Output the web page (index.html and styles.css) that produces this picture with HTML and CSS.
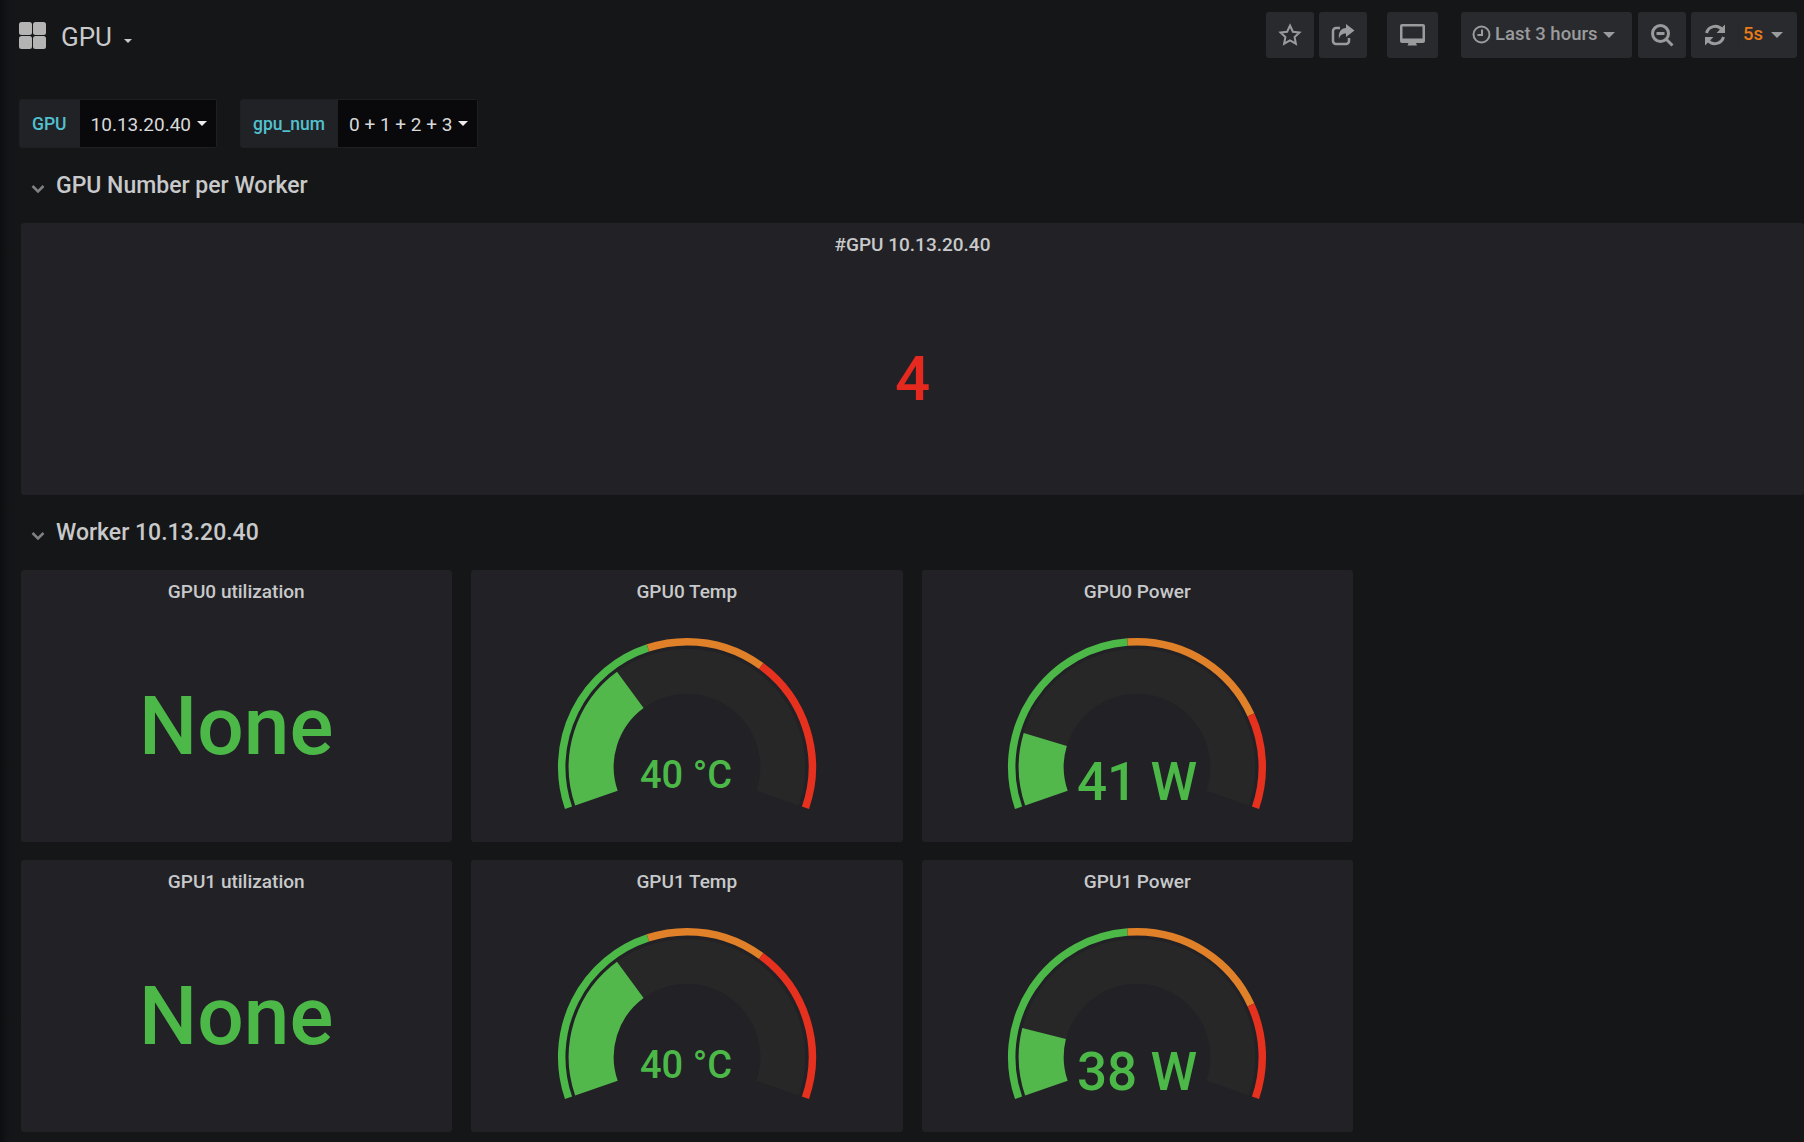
FILE: index.html
```html
<!DOCTYPE html>
<html>
<head>
	<meta charset="utf-8">
	<title>GPU</title>
	<link rel="stylesheet" href="styles.css">
</head>
<body>

	<header class="navbar">
		<div class="nav-title">
			<svg class="grid-icon" width="27" height="27" viewBox="0 0 27 27">
				<rect x="0" y="0" width="13" height="13" rx="2.5"></rect>
				<rect x="14" y="0" width="13" height="13" rx="2.5"></rect>
				<rect x="0" y="14" width="13" height="13" rx="2.5"></rect>
				<rect x="14" y="14" width="13" height="13" rx="2.5"></rect>
			</svg>
			<span class="dash-name">GPU</span>
			<span class="caret caret-small"></span>
		</div>
		<div class="nav-tools">
			<div class="btn btn-icon">
				<svg width="24" height="24" viewBox="0 0 24 24" class="icon-line"><path d="M12 2.500l2.900 6.200 6.600.8-4.900 4.600 1.300 6.600-5.900-3.300-5.900 3.300 1.300-6.600-4.900-4.600 6.600-.8z"></path></svg>
			</div>
			<div class="btn btn-icon">
				<svg width="26" height="24" viewBox="0 0 26 24" class="icon-share"><path d="M10 5H6a3 3 0 0 0-3 3v10a3 3 0 0 0 3 3h10a3 3 0 0 0 3-3v-3"></path><path class="icon-fill" d="M16 1l8.500 6.500-8.500 6.500v-3.500c-3.500 0-6 1.500-7 5.500C8 9 11 5 16 5z"></path></svg>
			</div>
			<div class="btn btn-tv">
				<svg width="27" height="24" viewBox="0 0 27 24"><path class="icon-fill" d="M3 1h21a2 2 0 0 1 2 2v15a2 2 0 0 1-2 2h-7l1 2.500H8.500l1-2.500H3a2 2 0 0 1-2-2V3a2 2 0 0 1 2-2zm.5 2.500v12h20v-12z"></path></svg>
			</div>
			<div class="btn btn-time">
				<svg width="19" height="19" viewBox="0 0 19 19" class="icon-line clock"><circle cx="9.500" cy="9.500" r="8"></circle><path d="M10 4.500v5.500H5.500"></path></svg>
				<span class="time-label">Last 3 hours</span>
				<span class="caret"></span>
			</div>
			<div class="btn btn-icon">
				<svg width="25" height="25" viewBox="0 0 25 25" class="icon-thick"><circle cx="10.500" cy="10.500" r="8"></circle><path d="M6.500 10.500h8"></path><path d="M16.500 16.500l6 6"></path></svg>
			</div>
			<div class="btn btn-refresh">
				<div class="refresh-icon">
					<svg width="24" height="24" viewBox="0 0 24 24" class="icon-thick"><path d="M3.500 10A9 9 0 0 1 19 6.500"></path><path d="M20.500 14A9 9 0 0 1 5 17.500"></path><path class="icon-fill" d="M22 1.500V10h-8.500z"></path><path class="icon-fill" d="M2 22.500V14h8.500z"></path></svg>
				</div>
				<div class="refresh-rate">
					<span class="rate">5s</span>
					<span class="caret"></span>
				</div>
			</div>
		</div>
	</header>

	<div class="filters">
		<div class="filter">
			<label class="filter-label">GPU</label>
			<div class="filter-value">10.13.20.40<span class="caret caret-white"></span></div>
		</div>
		<div class="filter">
			<label class="filter-label">gpu_num</label>
			<div class="filter-value">0 + 1 + 2 + 3<span class="caret caret-white"></span></div>
		</div>
	</div>

	<div class="row-title">
		<svg width="14" height="10" viewBox="0 0 14 10" class="chevron"><path d="M1.500 2l5.500 5.500L12.500 2"></path></svg>
		<span>GPU Number per Worker</span>
	</div>

	<section class="panel panel-wide">
		<h3 class="panel-title">#GPU 10.13.20.40</h3>
		<div class="stat stat-red">4</div>
	</section>

	<div class="row-title">
		<svg width="14" height="10" viewBox="0 0 14 10" class="chevron"><path d="M1.500 2l5.500 5.500L12.500 2"></path></svg>
		<span>Worker 10.13.20.40</span>
	</div>

	<div class="panel-grid">
		<section class="panel">
			<h3 class="panel-title">GPU0 utilization</h3>
			<div class="stat stat-green">None</div>
		</section>

		<section class="panel">
			<h3 class="panel-title">GPU0 Temp</h3>
			<svg class="gauge" width="270" height="190" viewBox="-135 -135 270 190">
				<path class="track" d="M-90.580 31.190A95.800 95.800 0 1 1 90.580 31.190"></path>
				<path class="fill" pathLength="120" stroke-dasharray="40 120" d="M-90.580 31.190A95.800 95.800 0 1 1 90.580 31.190"></path>
				<path class="limit green" pathLength="120" stroke-dasharray="50 120" d="M-118.470 40.800A125.300 125.300 0 1 1 118.470 40.800"></path>
				<path class="limit orange" pathLength="120" stroke-dasharray="0 50 30 120" d="M-118.470 40.800A125.300 125.300 0 1 1 118.470 40.800"></path>
				<path class="limit red" pathLength="120" stroke-dasharray="0 80 40 120" d="M-118.470 40.800A125.300 125.300 0 1 1 118.470 40.800"></path>
				<text class="gauge-text" x="-1" y="21">40 °C</text>
			</svg>
		</section>

		<section class="panel">
			<h3 class="panel-title">GPU0 Power</h3>
			<svg class="gauge" width="270" height="190" viewBox="-135 -135 270 190">
				<path class="track" d="M-90.580 31.190A95.800 95.800 0 1 1 90.580 31.190"></path>
				<path class="fill" pathLength="250" stroke-dasharray="41 250" d="M-90.580 31.190A95.800 95.800 0 1 1 90.580 31.190"></path>
				<path class="limit green" pathLength="250" stroke-dasharray="120 250" d="M-118.470 40.800A125.300 125.300 0 1 1 118.470 40.800"></path>
				<path class="limit orange" pathLength="250" stroke-dasharray="0 120 80 250" d="M-118.470 40.800A125.300 125.300 0 1 1 118.470 40.800"></path>
				<path class="limit red" pathLength="250" stroke-dasharray="0 200 50 250" d="M-118.470 40.800A125.300 125.300 0 1 1 118.470 40.800"></path>
				<text class="gauge-text gauge-text-big" y="33">41 W</text>
			</svg>
		</section>

		<section class="panel">
			<h3 class="panel-title">GPU1 utilization</h3>
			<div class="stat stat-green">None</div>
		</section>

		<section class="panel">
			<h3 class="panel-title">GPU1 Temp</h3>
			<svg class="gauge" width="270" height="190" viewBox="-135 -135 270 190">
				<path class="track" d="M-90.580 31.190A95.800 95.800 0 1 1 90.580 31.190"></path>
				<path class="fill" pathLength="120" stroke-dasharray="40 120" d="M-90.580 31.190A95.800 95.800 0 1 1 90.580 31.190"></path>
				<path class="limit green" pathLength="120" stroke-dasharray="50 120" d="M-118.470 40.800A125.300 125.300 0 1 1 118.470 40.800"></path>
				<path class="limit orange" pathLength="120" stroke-dasharray="0 50 30 120" d="M-118.470 40.800A125.300 125.300 0 1 1 118.470 40.800"></path>
				<path class="limit red" pathLength="120" stroke-dasharray="0 80 40 120" d="M-118.470 40.800A125.300 125.300 0 1 1 118.470 40.800"></path>
				<text class="gauge-text" x="-1" y="21">40 °C</text>
			</svg>
		</section>

		<section class="panel">
			<h3 class="panel-title">GPU1 Power</h3>
			<svg class="gauge" width="270" height="190" viewBox="-135 -135 270 190">
				<path class="track" d="M-90.580 31.190A95.800 95.800 0 1 1 90.580 31.190"></path>
				<path class="fill" pathLength="250" stroke-dasharray="38 250" d="M-90.580 31.190A95.800 95.800 0 1 1 90.580 31.190"></path>
				<path class="limit green" pathLength="250" stroke-dasharray="120 250" d="M-118.470 40.800A125.300 125.300 0 1 1 118.470 40.800"></path>
				<path class="limit orange" pathLength="250" stroke-dasharray="0 120 80 250" d="M-118.470 40.800A125.300 125.300 0 1 1 118.470 40.800"></path>
				<path class="limit red" pathLength="250" stroke-dasharray="0 200 50 250" d="M-118.470 40.800A125.300 125.300 0 1 1 118.470 40.800"></path>
				<text class="gauge-text gauge-text-big" y="33">38 W</text>
			</svg>
		</section>
	</div>

</body>
</html>
```
FILE: styles.css
```css
html, body {
  height: 100%;
  overflow: hidden;
}

body {
  margin: 0;
  font-family: Roboto, "Liberation Sans", sans-serif;
  color: #d8d9da;
  background: linear-gradient(90deg, #0d0e10 0, #141518 9px, #151618 20px);
}

/* top bar */
.navbar {
  display: flex;
  justify-content: space-between;
  height: 70px;
  padding: 12px 7px 12px 19px;
  box-sizing: border-box;
}

.nav-title {
  display: flex;
  align-items: center;
}

.grid-icon {
  margin-top: 1px;
  fill: #b4b4b4;
}

.dash-name {
  margin: 3px 0 0 15px;
  font-size: 26px;
  color: #c8c9ca;
}

.caret {
  display: inline-block;
  width: 0;
  height: 0;
  border-left: 6.5px solid transparent;
  border-right: 6.5px solid transparent;
  border-top: 6.5px solid #9a9b9d;
}

.caret-small {
  margin: 11px 0 0 12px;
  border-width: 4.5px 4.5px 0;
  border-top-color: #c8c9ca;
}

.caret-white {
  margin-left: 6px;
  margin-bottom: 3px;
  border-width: 5.5px 5.5px 0;
  border-top-color: #ececec;
}

.nav-tools {
  display: flex;
}

.btn {
  display: flex;
  align-items: center;
  height: 46px;
  border-radius: 3px;
  background: #292a2d;
  color: #9a9b9d;
  font-size: 18.500px;
  font-weight: 500;
}

.btn-icon {
  justify-content: center;
  width: 48px;
  margin-right: 5px;
}

.btn-tv {
  justify-content: center;
  width: 51px;
  margin: 0 23px 0 15px;
}

.btn-time {
  width: 171px;
  padding-left: 11px;
  box-sizing: border-box;
  margin-right: 6px;
}

.clock {
  margin-bottom: 2px;
}

.time-label {
  margin: 0 6px 2px 4px;
}

.btn-refresh {
  width: 106px;
}

.refresh-icon {
  display: flex;
  justify-content: center;
  width: 47px;
  border-right: 1px solid #26272a;
}

.refresh-rate {
  display: flex;
  align-items: center;
  padding-left: 4px;
}

.rate {
  margin: 0 8px 2px 0;
  color: #eb7b18;
}

.icon-line {
  fill: none;
  stroke: #9a9b9d;
  stroke-width: 2;
}

.icon-share {
  fill: none;
  stroke: #9a9b9d;
  stroke-width: 2.500;
}

.icon-thick {
  fill: none;
  stroke: #9a9b9d;
  stroke-width: 3;
}

.icon-fill {
  fill: #9a9b9d;
  stroke: none;
}

/* template variables */
.filters {
  display: flex;
  gap: 23px;
  margin: 29px 0 0 19px;
}

.filter {
  display: flex;
  height: 49px;
  box-sizing: border-box;
  border: 1px solid #1f2023;
  border-radius: 3px;
}

.filter-label {
  display: flex;
  align-items: center;
  padding: 0 13px 0 12px;
  background: #212226;
  color: #52c1cf;
  font-weight: 500;
  font-size: 17.500px;
}

.filter-value {
  display: flex;
  align-items: center;
  padding: 2px 9px 0 11px;
  background: #09090b;
  color: #d8d9da;
  font-size: 19px;
}

/* dashboard rows */
.row-title {
  display: flex;
  align-items: center;
  height: 75px;
  padding: 0 0 1px 31px;
  box-sizing: border-box;
  font-size: 23px;
  font-weight: 500;
  color: #c8c9ca;
}

.chevron {
  margin: 7px 11px 0 0;
  fill: none;
  stroke: #808184;
  stroke-width: 2.500;
}

.panel {
  display: flex;
  flex-direction: column;
  align-items: center;
  height: 272px;
  border-radius: 3px;
  background: #212126;
}

.panel-wide {
  margin-left: 21px;
}

.panel-grid {
  display: grid;
  grid-template-columns: repeat(3, 431.5px);
  gap: 18px 19px;
  margin-left: 20.500px;
}

.panel-title {
  margin: 0;
  padding: 10px 0 6px;
  font-size: 19px;
  line-height: 24px;
  font-weight: 500;
  color: #c8c9ca;
}

.stat {
  display: flex;
  align-items: center;
  flex: 1;
  line-height: 1;
}

.stat-red {
  font-size: 62px;
  font-weight: 500;
  color: #e5291f;
}

.stat-green {
  font-size: 82px;
  font-weight: 500;
  color: #4cb848;
}

/* gauges */
.gauge {
  margin-top: 22px;
  fill: none;
}

.track {
  stroke: #272727;
  stroke-width: 45;
}

.fill {
  stroke: #52b84b;
  stroke-width: 45;
}

.limit {
  stroke-width: 7.500;
}

.green {
  stroke: #4cb848;
}

.orange {
  stroke: #e08029;
}

.red {
  stroke: #e7311f;
}

.gauge-text {
  fill: #4cb848;
  font-size: 38px;
  font-weight: 500;
  text-anchor: middle;
}

.gauge-text-big {
  font-size: 53px;
}
```
